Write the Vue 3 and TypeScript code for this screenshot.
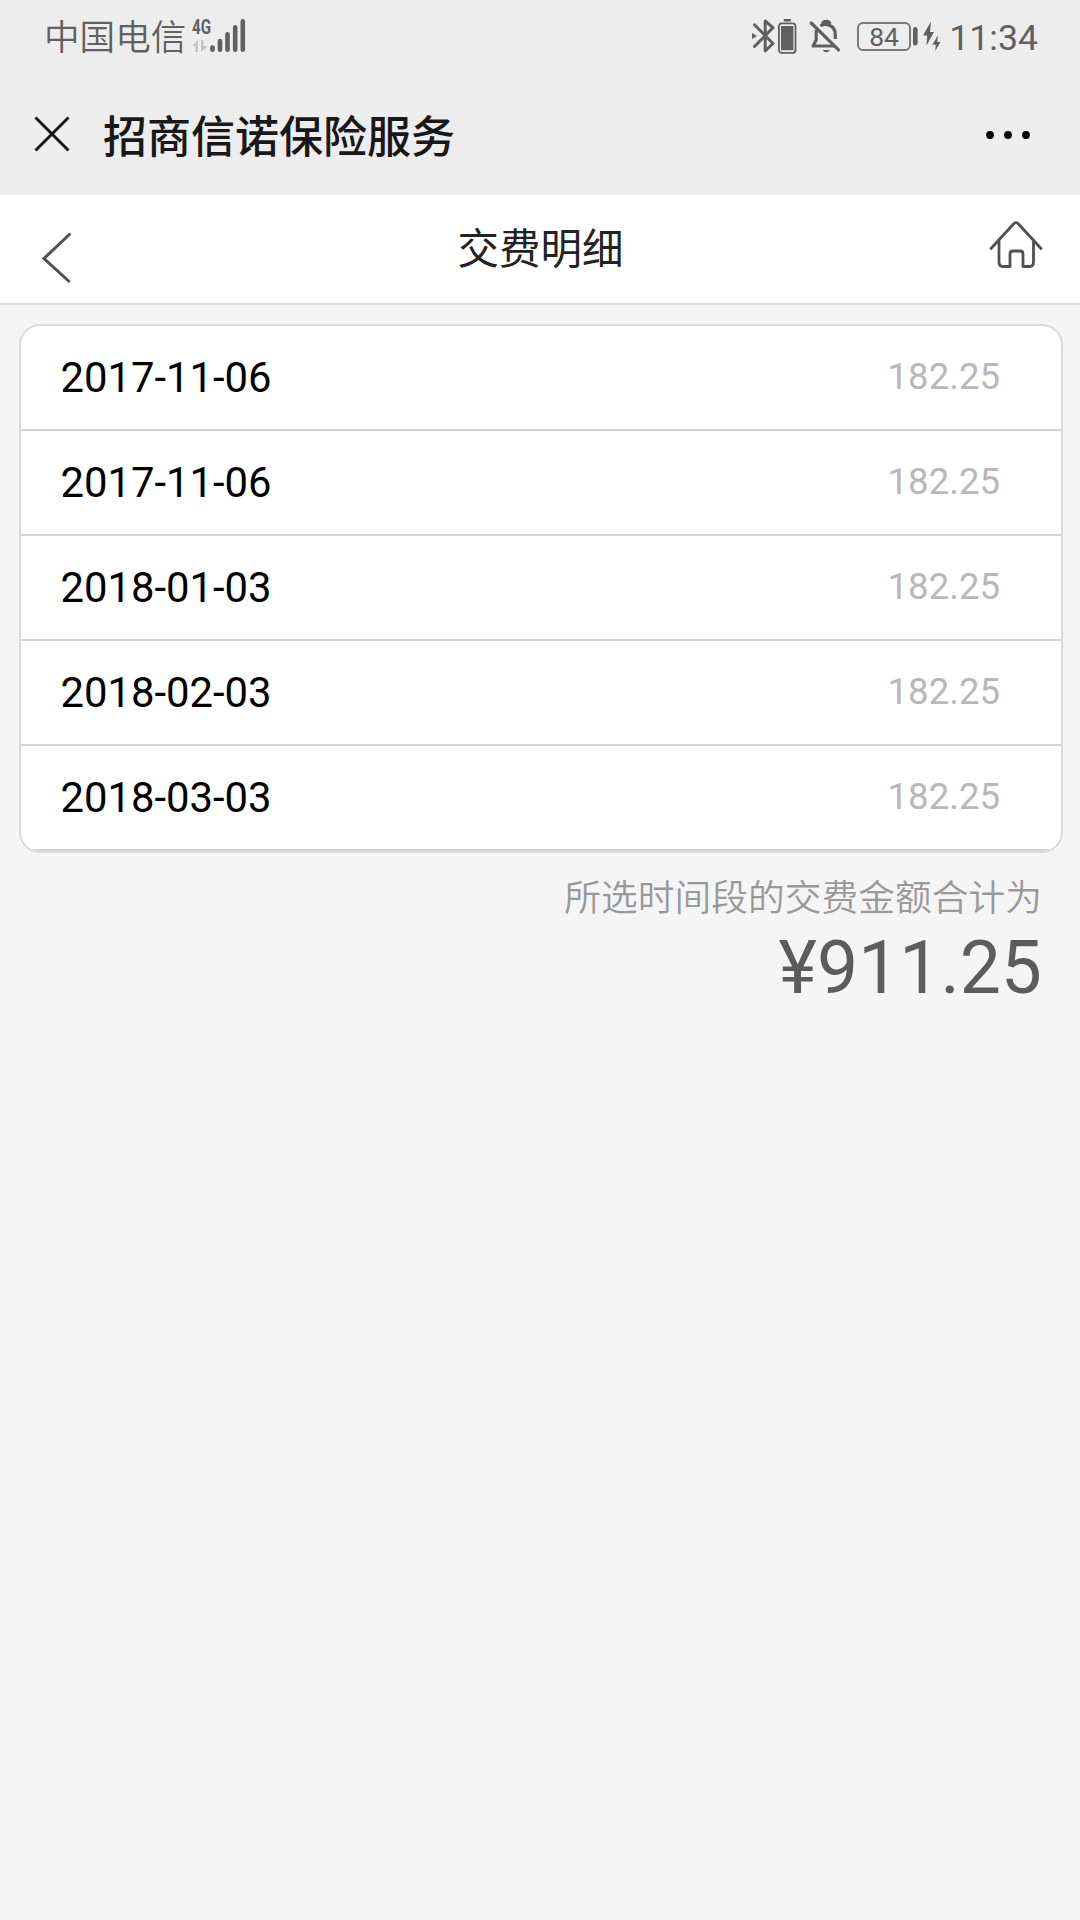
<script setup lang="ts">
interface Payment {
  date: string
  amount: string
}

const payments: Payment[] = [
  { date: '2017-11-06', amount: '182.25' },
  { date: '2017-11-06', amount: '182.25' },
  { date: '2018-01-03', amount: '182.25' },
  { date: '2018-02-03', amount: '182.25' },
  { date: '2018-03-03', amount: '182.25' },
]
</script>

<template>
  <div class="screen">
    <div class="status">
      <span class="carrier">中国电信</span>
      <svg class="signal" width="58" height="40" viewBox="0 0 58 40">
        <text class="net" x="0" y="19" textLength="19" lengthAdjust="spacingAndGlyphs">4G</text>
        <path d="M0 31 L6 25 V37 H3.5 V31 Z M9 25 H11.5 V31 H16 L9 37 Z" fill="#c4c4c4" />
        <g stroke="#606060" stroke-width="4.6" stroke-linecap="round">
          <path d="M20.5 32.6 V34.7 M28 26 V34.7 M35.5 19.2 V34.7 M43.2 12.2 V34.7 M50.8 6.3 V34.7" />
        </g>
      </svg>
      <span class="fill"></span>
      <svg class="icon bt" width="24" height="40" viewBox="0 0 24 40">
        <path d="M2.5 9.8 L21 28.5 L13.2 35.8 V6 L21 12.6 L2.5 31.5" fill="none" stroke="#606060" stroke-width="3" stroke-linejoin="round" stroke-linecap="round" />
        <path d="M0 18 L5 21 L0 24 Z" fill="#606060" />
      </svg>
      <svg class="icon cell" width="20" height="40" viewBox="0 0 20 40">
        <rect x="6.5" y="4" width="7.5" height="2.6" rx="1" fill="#606060" />
        <rect x="1.9" y="8.3" width="16.6" height="29.6" rx="3" fill="none" stroke="#606060" stroke-width="1.8" />
        <rect x="4" y="11" width="12.4" height="24.2" fill="#606060" />
      </svg>
      <svg class="icon bell" width="34" height="40" viewBox="0 0 34 40">
        <g fill="none" stroke="#606060" stroke-width="3.2">
          <path d="M8.2 15 V25 L5 31 H26.5" stroke-linejoin="round" />
          <path d="M12.4 11 C18 7.4 27.3 10.5 27.3 19.5 V24" />
          <path d="M14.6 9 C15 5.4 21.5 5.4 21.8 9" />
          <path d="M3.2 8 L30.5 34.8" stroke-linecap="round" />
        </g>
        <path d="M14.4 35 H22 Q18.5 39.4 14.4 35 Z" fill="#606060" />
      </svg>
      <span class="level">84</span>
      <svg class="icon bolts" width="30" height="40" viewBox="0 0 30 40">
        <rect x="2" y="12" width="4.6" height="18.5" rx="2.2" fill="#606060" />
        <path d="M20 6.5 L12 20.5 H16.2 L15.5 30.5 L23 17 H19 Z M26.8 20.5 L21.4 29.8 H24.8 L24.2 36 L29.5 27 H26.4 Z" fill="#606060" />
      </svg>
      <span class="time">11:34</span>
    </div>

    <div class="appbar">
      <svg class="close" width="36" height="36" viewBox="0 0 36 36">
        <path d="M1.5 1.5 L34.5 34.5 M34.5 1.5 L1.5 34.5" stroke="#181818" stroke-width="3" />
      </svg>
      <span class="apptitle">招商信诺保险服务</span>
      <svg class="more" width="44" height="8" viewBox="0 0 44 8">
        <circle cx="4" cy="4" r="3.9" /><circle cx="22" cy="4" r="3.9" /><circle cx="40" cy="4" r="3.9" />
      </svg>
    </div>

    <header class="head">
      <svg class="back" width="30" height="52" viewBox="0 0 30 52">
        <path d="M28.4 1.5 L2 26.5 L27.7 50" fill="none" stroke="#505050" stroke-width="3" />
      </svg>
      <h1 class="pagetitle">交费明细</h1>
      <svg class="home" width="54" height="50" viewBox="0 0 54 50">
        <g fill="none" stroke="#505050" stroke-width="2.8" stroke-linecap="round" stroke-linejoin="round">
          <path d="M2 28.5 L24.5 4 Q27 1.2 29.5 4 L52 28.5" />
          <path d="M10 21 V42 Q10 46.5 14 46.5 H21 V34 Q21 31 24 31 H31 Q34 31 34 34 V46.5 H40.5 Q44.5 46.5 44.5 42 V21" />
        </g>
      </svg>
    </header>

    <ul class="card">
      <li v-for="(p, i) in payments" :key="i" class="row">
        <span class="date">{{ p.date }}</span>
        <span class="amount">{{ p.amount }}</span>
      </li>
    </ul>

    <div class="summary">
      <div class="label">所选时间段的交费金额合计为</div>
      <div class="total">¥911.25</div>
    </div>
  </div>
</template>

<style>
body {
  background: #f5f5f5;
}
</style>

<style scoped>
.screen {
  width: 1080px;
  height: 1920px;
  overflow: hidden;
  background: #f5f5f5;
  font-family: Roboto, "Noto Sans CJK SC", sans-serif;
}
.status {
  display: flex;
  align-items: flex-start;
  box-sizing: border-box;
  height: 75px;
  padding: 15px 42px 0 44px;
  background: #ededed;
  color: #606060;
}
.status svg {
  flex: none;
}
.carrier {
  margin-top: 1px;
  font-size: 35.6px;
  line-height: 44px;
  font-weight: 350;
}
.signal {
  margin-left: 6px;
}
.net {
  font-size: 20.5px;
  font-weight: 700;
  fill: #606060;
}
.fill {
  flex: 1;
}
.cell {
  margin-left: 1px;
}
.bell {
  margin-left: 11px;
}
.level {
  box-sizing: border-box;
  width: 54px;
  height: 29px;
  margin: 7px 0 0 15px;
  border: 2px solid #7a7a7a;
  border-radius: 6px;
  font-size: 26.5px;
  line-height: 25px;
  text-align: center;
}
.time {
  margin: 1px 0 0 8px;
  font-size: 35.7px;
  line-height: 44px;
}
.appbar {
  display: flex;
  align-items: center;
  box-sizing: border-box;
  height: 120px;
  padding: 0 50px 2px 33.5px;
  background: #ededed;
}
.close {
  margin-top: -1px;
}
.apptitle {
  flex: 1;
  margin: 7px 0 0 33.5px;
  font-size: 44px;
  line-height: 60px;
  font-weight: 500;
  color: #181818;
}
.more {
  margin-top: 1px;
}
.head {
  display: flex;
  justify-content: space-between;
  align-items: flex-start;
  box-sizing: border-box;
  height: 110px;
  padding: 0 37px 0 42px;
  background: #fff;
  border-bottom: 2px solid #dcdcdc;
}
.back {
  margin: 37px 20px 0 0;
}
.pagetitle {
  margin: 25px 0 0;
  font-size: 41.5px;
  line-height: 60px;
  font-weight: 400;
  color: #222;
}
.home {
  margin-top: 25px;
}
.card {
  margin: 19px 17px 0 19px;
  padding: 0;
  list-style: none;
  background: #fff;
  border: 2px solid #dadada;
  border-radius: 21px;
  overflow: hidden;
}
.row {
  display: flex;
  justify-content: space-between;
  align-items: center;
  box-sizing: border-box;
  height: 105px;
  padding: 0 61px 0 39.5px;
  border-bottom: 2px solid #d3d3d3;
}
.date {
  font-size: 41.8px;
  color: #000;
}
.amount {
  padding-bottom: 2px;
  font-size: 36.6px;
  line-height: 44px;
  color: #b8b8b8;
}
.summary {
  padding: 22px 38px 0 0;
  text-align: right;
}
.label {
  font-size: 36.75px;
  line-height: 48px;
  font-weight: 350;
  color: #999;
}
.total {
  margin-top: 2px;
  font-size: 73.2px;
  line-height: 86px;
  color: #5c5c5c;
}
</style>
